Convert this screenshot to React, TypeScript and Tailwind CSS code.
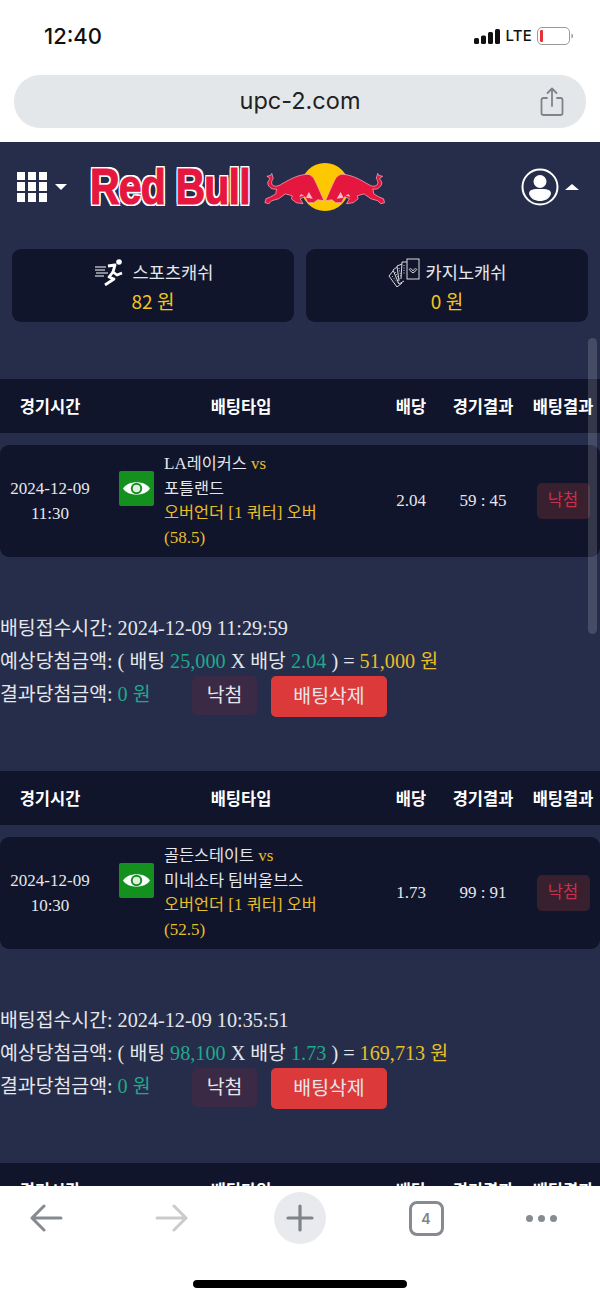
import React from "react";

const serif = "font-['Liberation_Serif','Noto_Sans_CJK_KR',serif]";

// hangul runs a touch smaller than the latin around them
function K({ children }: { children: React.ReactNode }) {
  return <span className="text-[0.96em]">{children}</span>;
}

function Bull({ flip }: { flip?: boolean }) {
  return (
    <svg viewBox="0 0 64 34" className={`w-[64px] h-[34px] ${flip ? "-scale-x-100" : ""}`}>
      <path
        d="M5 4 L9 3 L10 1 L11.500 6 C10 9 9 11 11 13 C13 15 17 14 20 12 C27 8 35 3 45 2 C50 1.500 53 5 55 10 C57 14 60 21 63.500 29 L57 28 L53 31 L47 31 L44 25 L39 27 L42 32 L35 31 L30 27 L31 24 L24 22 L17 27 L10 29 L7 32 L3 31 L4 27 L9 25 L14 22 L15 17 C10 18 7 15 6 12 C5 9 8 8 8 6 Z"
        fill="#e5173f"
        stroke="#f7b9c6"
        strokeWidth="0.7"
        strokeLinejoin="round"
      />
      <path d="M48 20 L52 27 L45 26 Z M40 22 L43 24 L38 25 Z" fill="#f7b9c6" />
    </svg>
  );
}

function RedBullLogo() {
  return (
    <div className="flex items-center">
      <span className="w-[160px] whitespace-nowrap origin-left scale-x-[0.82] font-['Liberation_Sans',sans-serif] font-bold text-[50px] leading-[48px] tracking-[-1px] text-[#e5173f] [-webkit-text-stroke:1.2px_#e5173f] [text-shadow:2px_0_#fff,-2px_0_#fff,0_2px_#fff,0_-2px_#fff,2px_2px_#fff,-2px_2px_#fff,2px_-2px_#fff,-2px_-2px_#fff]">
        Red Bull
      </span>
      <div className="relative w-[125px] h-[48px] ml-[12px]">
        <div className="absolute left-[39px] top-0 w-[48px] h-[48px] rounded-full bg-[#fdc800]" />
        <div className="absolute inset-0 flex items-center justify-between pt-[4px]">
          <Bull />
          <Bull flip />
        </div>
      </div>
    </div>
  );
}

function RunnerIcon() {
  return (
    <svg viewBox="0 0 28 28" className="w-[28px] h-[28px] mr-[10px] ml-[2px] text-white" fill="none" stroke="currentColor">
      <circle cx="24" cy="4" r="2.800" fill="currentColor" stroke="none" />
      <path d="M13 8 L20 7 L18 14 L22 17 L27 15" strokeWidth="2.800" strokeLinejoin="round" />
      <path d="M18 14 L14 19 L19 21 L10 27" strokeWidth="2.800" strokeLinejoin="round" />
      <path d="M0 9 H11 M0 12 H10 M1 15 H13 M0 18 H9" strokeWidth="1.200" />
    </svg>
  );
}

function CardsIcon() {
  return (
    <svg viewBox="0 0 32 30" className="w-[32px] h-[30px] mr-[6px]" fill="none" stroke="#d8dbe0" strokeWidth="1">
      <rect x="19" y="2" width="12" height="20" />
      <path d="M25 14 C23 10 20 12 22 13.500 L25 16 L28 13.500 C30 12 27 10 25 14 Z" />
      <path d="M19 5 L14 5 L13 22 M14 7 L9 9 L11 24 M9 10 L5 13 L11 27 L16 24 M5 14 L1 19 L9 30 L14 26" />
      <path d="M4 19 L10 26 M7 15 L12 23 M11 11 L13 20 M16 8 V18" strokeDasharray="1 1.500" />
    </svg>
  );
}

function CashCard({ icon, label, value }: { icon: React.ReactNode; label: string; value: string }) {
  return (
    <div className="h-[73px] bg-[#11152b] rounded-[9px] flex flex-col items-center pt-[7px]">
      <div className="flex items-center h-[32px] text-[#e5e7eb] text-[17.600px]">
        {icon}
        <span>{label}</span>
      </div>
      <div className="text-[#f5c518] text-[19px] leading-[24px] mt-[1px]">{value}</div>
    </div>
  );
}

function HeaderRow() {
  return (
    <div className="h-[54px] bg-[#11152b] flex items-center text-white text-[16.500px] font-semibold whitespace-nowrap font-['Noto_Sans_CJK_KR',sans-serif]">
      <div className="w-[100px] text-center">경기시간</div>
      <div className="w-[282px] text-center">배팅타입</div>
      <div className="w-[58px] text-center">배당</div>
      <div className="w-[86px] text-center">경기결과</div>
      <div className="w-[74px] text-center">배팅결과</div>
    </div>
  );
}

function EyeBadge() {
  return (
    <div className="w-[35px] h-[35px] bg-[#14901f] rounded-[2px] flex items-center justify-center">
      <svg viewBox="0 0 28 18" className="w-[29px] h-[19px]">
        <path d="M1 9 C6 1 22 1 27 9 C22 17 6 17 1 9 Z" fill="#fff" />
        <circle cx="14" cy="9" r="5.500" fill="#14901f" />
        <circle cx="14" cy="9" r="3.600" fill="#dfeee0" />
      </svg>
    </div>
  );
}

type Bet = {
  date: string;
  time: string;
  home: string;
  away: string;
  line: string;
  odds: string;
  score: string;
  placed: string;
  stake: string;
  win: string;
};

function BetBlock({ bet }: { bet: Bet }) {
  return (
    <div className={serif}>
      <HeaderRow />
      <div className="mt-[12px] h-[112px] bg-[#11152b] rounded-[9px] flex items-center text-[#e5e7eb] text-[17px]">
        <div className="w-[100px] text-center leading-[25px] -mt-[1px]">
          <div>{bet.date}</div>
          <div>{bet.time}</div>
        </div>
        <div className="w-[64px] pl-[19px] -mt-[26px]">
          <EyeBadge />
        </div>
        <div className="w-[218px] leading-[24.500px] whitespace-nowrap">
          <div>
            {bet.home.startsWith("LA") ? (
              <>
                LA<K>{bet.home.slice(2)}</K>
              </>
            ) : (
              <K>{bet.home}</K>
            )}{" "}
            <span className="text-[#e8bf27]">vs</span>
          </div>
          <div>
            <K>{bet.away}</K>
          </div>
          <div className="text-[#e8bf27]">
            <K>오버언더</K> [1 <K>쿼터</K>] <K>오버</K>
          </div>
          <div className="text-[#e8bf27]">{bet.line}</div>
        </div>
        <div className="w-[58px] text-center -mt-[1px]">{bet.odds}</div>
        <div className="w-[86px] text-center -mt-[1px]">{bet.score}</div>
        <div className="w-[74px] flex justify-center">
          <div className="w-[53px] h-[36px] bg-[#38202f] rounded-[5px] flex items-center justify-center text-[#c8324a] text-[16.500px]">
            낙첨
          </div>
        </div>
      </div>
      <div className="mt-[55px] text-[#e5e7eb] text-[20.200px] leading-[33px] whitespace-nowrap">
        <div>
          <K>배팅접수시간</K>: {bet.placed}
        </div>
        <div>
          <K>예상당첨금액</K>: ( <K>배팅</K> <span className="text-[#1fa88c]">{bet.stake}</span> X <K>배당</K>{" "}
          <span className="text-[#1fa88c]">{bet.odds}</span> ) ={" "}
          <span className="text-[#e8bf27]">
            {bet.win} <K>원</K>
          </span>
        </div>
        <div className="flex items-start h-[41px] -mt-[2px]">
          <div className="w-[192px] pt-[2px]">
            <K>결과당첨금액</K>:{" "}
            <span className="text-[#1fa88c]">
              0 <K>원</K>
            </span>
          </div>
          <div className="w-[65px] h-[39px] bg-[#3a2a45] rounded-[5px] flex items-center justify-center">
            <K>낙첨</K>
          </div>
          <div className="ml-[14px] w-[116px] h-[41px] bg-[#dc3a3a] rounded-[5px] flex items-center justify-center">
            <K>배팅삭제</K>
          </div>
        </div>
      </div>
    </div>
  );
}

const bets: Bet[] = [
  {
    date: "2024-12-09",
    time: "11:30",
    home: "LA레이커스",
    away: "포틀랜드",
    line: "(58.5)",
    odds: "2.04",
    score: "59 : 45",
    placed: "2024-12-09 11:29:59",
    stake: "25,000",
    win: "51,000",
  },
  {
    date: "2024-12-09",
    time: "10:30",
    home: "골든스테이트",
    away: "미네소타 팀버울브스",
    line: "(52.5)",
    odds: "1.73",
    score: "99 : 91",
    placed: "2024-12-09 10:35:51",
    stake: "98,100",
    win: "169,713",
  },
];

export default function App() {
  return (
    <div className="w-[600px] h-[1299px] overflow-hidden relative flex flex-col bg-white font-['Noto_Sans_CJK_KR',sans-serif]">
      {/* status bar + url */}
      <div className="h-[142px] shrink-0">
        <div className="h-[75px] flex items-start justify-between pl-[44px] pr-[26px] pt-[21px]">
          <span className="font-['Inter',sans-serif] font-medium text-[22px] leading-[30px] text-[#111]">12:40</span>
          <div className="flex items-center gap-[5px] h-[30px]">
            <svg viewBox="0 0 26 15" className="w-[26px] h-[15px]">
              <rect x="0" y="9" width="5" height="6" rx="1.500" fill="#111" />
              <rect x="7" y="6.500" width="5" height="8.500" rx="1.500" fill="#111" />
              <rect x="14" y="3" width="5" height="12" rx="1.500" fill="#111" />
              <rect x="21" y="0" width="5" height="15" rx="1.500" fill="#111" />
            </svg>
            <span className="font-['Inter',sans-serif] font-medium text-[15px] text-[#111] tracking-[0.2px]">LTE</span>
            <svg viewBox="0 0 37 18" className="w-[37px] h-[18px]">
              <rect x="0.500" y="0.500" width="32" height="17" rx="4.500" fill="none" stroke="#9a9a9a" />
              <rect x="3" y="3" width="3" height="12" rx="1" fill="#e8323a" />
              <path d="M34.500 6.500 C36.500 7.500 36.500 10.500 34.500 11.500 Z" fill="#8a8a8a" />
            </svg>
          </div>
        </div>
        <div className="mx-[14px] h-[53px] bg-[#e4e7ea] rounded-[26px] relative flex items-center justify-center pb-[2px]">
          <span className="font-['Inter',sans-serif] text-[23.500px] text-[#222]">upc-2.com</span>
          <svg
            viewBox="0 0 24 30"
            className="absolute right-[22px] top-[12px] w-[24px] h-[30px]"
            fill="none"
            stroke="#7e8489"
            strokeWidth="1.800"
            strokeLinecap="round"
            strokeLinejoin="round"
          >
            <path d="M7 11 H3.500 Q1.500 11 1.500 13 V26 Q1.500 28 3.500 28 H20.500 Q22.500 28 22.500 26 V13 Q22.500 11 20.500 11 H17" />
            <path d="M12 19 V2 M7.500 6 L12 1.500 L16.500 6" />
          </svg>
        </div>
      </div>

      {/* page */}
      <div className="flex-1 min-h-0 bg-[#262d4a] overflow-hidden relative">
        <div className="h-[107px] flex items-center pl-[17px] pr-[21px] pb-[18px]">
          <div className="w-[30px] h-[30px] grid grid-cols-3 gap-[2.500px]">
            {Array.from({ length: 9 }).map((_, i) => (
              <div key={i} className="bg-white" />
            ))}
          </div>
          <div className="ml-[8px] w-0 h-0 border-x-[6px] border-x-transparent border-t-[6px] border-t-white" />
          <div className="ml-[23px]">
            <RedBullLogo />
          </div>
          <div className="ml-auto flex items-center gap-[6px]">
            <svg viewBox="0 0 38 38" className="w-[38px] h-[38px]">
              <circle cx="19" cy="19" r="17.500" fill="none" stroke="#fff" strokeWidth="2" />
              <circle cx="19" cy="13.500" r="6.500" fill="#fff" />
              <path d="M8 26 C8 21 13 21 19 21 C25 21 30 21 30 26 C28 31 24 33 19 33 C14 33 10 31 8 26 Z" fill="#fff" />
            </svg>
            <div className="w-0 h-0 border-x-[7px] border-x-transparent border-b-[6px] border-b-white" />
          </div>
        </div>

        <div className="grid grid-cols-2 gap-[12px] px-[12px]">
          <CashCard icon={<RunnerIcon />} label="스포츠캐쉬" value="82 원" />
          <CashCard icon={<CardsIcon />} label="카지노캐쉬" value="0 원" />
        </div>

        <div className="mt-[57px] flex flex-col gap-[54px]">
          {bets.map((bet) => (
            <BetBlock key={bet.placed} bet={bet} />
          ))}
          <HeaderRow />
        </div>

        {/* scroll thumb */}
        <div className="absolute left-[588px] top-[196px] w-[9px] h-[296px] rounded-full bg-white/15" />
      </div>

      {/* browser toolbar */}
      <div className="h-[113px] shrink-0 bg-white relative">
        <div className="h-[64px] flex items-center">
          <div className="w-[92px] flex justify-center">
            <svg viewBox="0 0 34 28" className="w-[34px] h-[28px]" fill="none" stroke="#858b90" strokeWidth="3" strokeLinecap="round" strokeLinejoin="round">
              <path d="M32 14 H3 M15 2 L3 14 L15 26" />
            </svg>
          </div>
          <div className="w-[160px] flex justify-center">
            <svg viewBox="0 0 34 28" className="w-[34px] h-[28px]" fill="none" stroke="#c9cbcd" strokeWidth="3" strokeLinecap="round" strokeLinejoin="round">
              <path d="M2 14 H31 M19 2 L31 14 L19 26" />
            </svg>
          </div>
          <div className="w-[96px] flex justify-center">
            <div className="w-[52px] h-[52px] rounded-full bg-[#e9eaed] flex items-center justify-center">
              <svg viewBox="0 0 28 28" className="w-[28px] h-[28px]" fill="none" stroke="#7e8489" strokeWidth="3.200" strokeLinecap="round">
                <path d="M14 2 V26 M2 14 H26" />
              </svg>
            </div>
          </div>
          <div className="w-[156px] flex justify-center">
            <div className="w-[35px] h-[35px] rounded-[8px] border-[3px] border-[#858b90] flex items-center justify-center font-['Inter',sans-serif] font-semibold text-[14px] text-[#7e8489]">
              4
            </div>
          </div>
          <div className="w-[74px] flex justify-center gap-[5px]">
            <div className="w-[7px] h-[7px] rounded-full bg-[#858b90]" />
            <div className="w-[7px] h-[7px] rounded-full bg-[#858b90]" />
            <div className="w-[7px] h-[7px] rounded-full bg-[#858b90]" />
          </div>
        </div>
        <div className="absolute left-[193px] top-[94px] w-[214px] h-[8px] rounded-full bg-black" />
      </div>
    </div>
  );
}
